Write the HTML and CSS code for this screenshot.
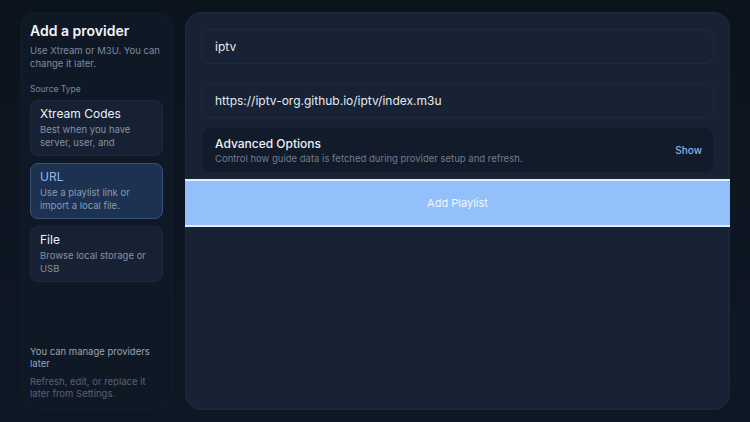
FILE: index.html
```html
<!DOCTYPE html>
<html lang="en">
<head>
  <meta charset="UTF-8">
  <meta name="viewport" content="width=device-width, initial-scale=1.0">
  <title>Add a provider</title>
  <link rel="stylesheet" href="styles.css">
</head>
<body>
  <div class="layout">
    <aside class="side">
      <h1>Add a provider</h1>
      <p class="side-sub">Use Xtream or M3U. You can change it later.</p>

      <div class="side-label">Source Type</div>
      <div class="source">
        <div class="source-title">Xtream Codes</div>
        <div class="source-desc">Best when you have server, user, and</div>
      </div>
      <div class="source active">
        <div class="source-title">URL</div>
        <div class="source-desc">Use a playlist link or import a local file.</div>
      </div>
      <div class="source">
        <div class="source-title">File</div>
        <div class="source-desc">Browse local storage or USB</div>
      </div>

      <div class="side-foot">
        <div class="foot-title">You can manage providers later</div>
        <div class="foot-desc">Refresh, edit, or replace it later from Settings.</div>
      </div>
    </aside>

    <main class="main">
      <div class="field">iptv</div>
      <div class="field url">https://iptv-org.github.io/iptv/index.m3u</div>

      <div class="advanced">
        <div>
          <div class="adv-title">Advanced Options</div>
          <div class="adv-desc">Control how guide data is fetched during provider setup and refresh.</div>
        </div>
        <span class="adv-toggle">Show</span>
      </div>

      <button class="add-btn">Add Playlist</button>
    </main>
  </div>
</body>
</html>
```

FILE: styles.css
```css
* {
  box-sizing: border-box;
}

body {
  margin: 0;
  height: 422px;
  overflow: hidden;
  font-family: Inter, "Noto Sans", sans-serif;
  background: linear-gradient(180deg, #0b131d 0%, #0e1825 100%);
  color: #e6ebf2;
}

.layout {
  display: flex;
  gap: 12px;
  height: 100%;
  padding: 12px 20px 12px 20px;
}

/* left column */
.side {
  width: 153px;
  flex-shrink: 0;
  display: flex;
  flex-direction: column;
  padding: 9px 9px 9px 9px;
  border-radius: 14px;
  background: #0f1926;
  border: 1px solid #111c2a;
}

h1 {
  margin: 0;
  font-size: 14px;
  font-weight: 600;
  color: #f1f4f8;
}

.side-sub {
  margin: 5px 0 0;
  font-size: 9.5px;
  line-height: 13px;
  color: #7f8a99;
}

.side-label {
  margin: 14px 0 6px;
  font-size: 8.5px;
  color: #7c8797;
}

.source {
  margin-bottom: 7px;
  padding: 5px 9px 6px;
  border-radius: 8px;
  background: #162133;
  border: 1px solid #1d293b;
}

.source-title {
  font-size: 12px;
  line-height: 16px;
  color: #eef1f6;
  margin-bottom: 1px;
}

.source-desc {
  font-size: 9.5px;
  line-height: 13px;
  color: #8690a0;
}

.source.active {
  background: #1d3150;
  border-color: #36527c;
}

.source.active .source-title {
  color: #8db6f4;
}

.source.active .source-desc {
  color: #8a9bb3;
}

.side-foot {
  margin-top: auto;
}

.foot-title {
  font-size: 9.5px;
  line-height: 12px;
  color: #9aa3b0;
}

.foot-desc {
  margin-top: 6px;
  font-size: 9.5px;
  line-height: 12px;
  color: #566273;
}

/* right panel */
.main {
  flex: 1;
  padding: 16px 15px;
  border-radius: 16px;
  background: #172235;
  border: 1px solid #1d2a3d;
  display: flex;
  flex-direction: column;
}

.field {
  height: 35px;
  display: flex;
  align-items: center;
  padding: 0 13px;
  font-size: 12px;
  color: #e7ebf1;
  border-radius: 9px;
  border: 1px solid #1e2b3f;
  background: #172235;
}

.field.url {
  margin-top: 19px;
}

.advanced {
  margin-top: 9px;
  height: 46px;
  display: flex;
  align-items: center;
  justify-content: space-between;
  padding: 0 11px 0 13px;
  border-radius: 9px;
  background: #111b2a;
  border: 1px solid #172234;
}

.adv-title {
  font-size: 12px;
  font-weight: 500;
  color: #eef1f6;
}

.adv-desc {
  margin-top: 2px;
  font-size: 9.5px;
  color: #717c8c;
}

.adv-toggle {
  font-size: 10px;
  font-weight: 500;
  color: #8eb3e6;
}

.add-btn {
  margin: 6px -16px 0;
  height: 48px;
  border: none;
  border-top: 2px solid #e4eefc;
  border-bottom: 2px solid #e4eefc;
  background: #93bffb;
  color: #f2f7ff;
  font-family: Inter, "Noto Sans", sans-serif;
  font-size: 11px;
  cursor: pointer;
}
```
